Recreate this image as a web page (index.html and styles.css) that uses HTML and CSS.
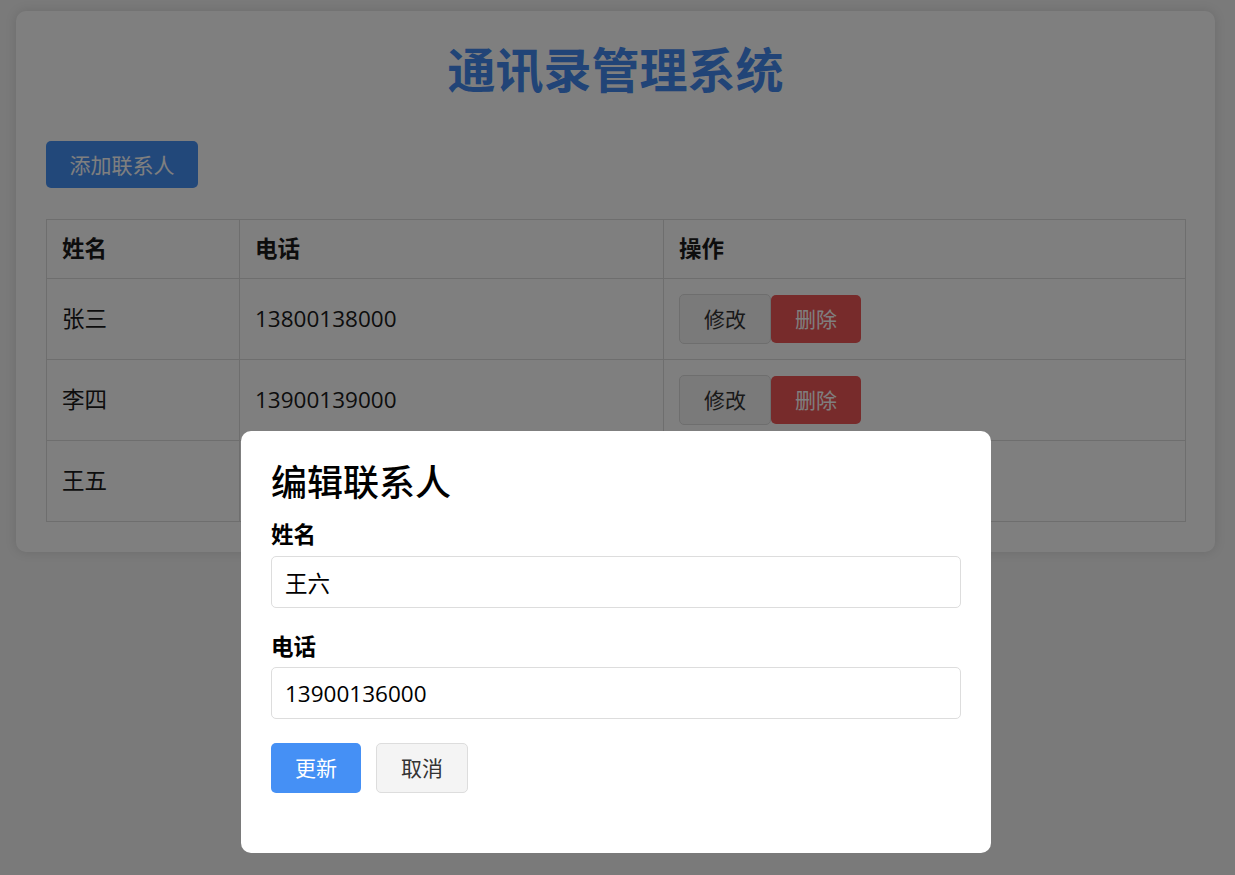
FILE: index.html
```html
<!DOCTYPE html>
<html lang="zh">
<head>
<meta charset="utf-8">
<title>通讯录管理系统</title>
<link rel="stylesheet" href="styles.css">
</head>
<body>
<div class="container">
  <h1 class="title">通讯录管理系统</h1>
  <div class="toolbar">
    <button class="btn btn-primary btn-add">添加联系人</button>
  </div>
  <table class="contacts">
    <colgroup>
      <col class="col-name">
      <col class="col-phone">
      <col class="col-ops">
    </colgroup>
    <thead>
      <tr><th>姓名</th><th>电话</th><th>操作</th></tr>
    </thead>
    <tbody>
      <tr>
        <td>张三</td><td>13800138000</td>
        <td><div class="ops"><button class="btn btn-edit">修改</button><button class="btn btn-delete">删除</button></div></td>
      </tr>
      <tr>
        <td>李四</td><td>13900139000</td>
        <td><div class="ops"><button class="btn btn-edit">修改</button><button class="btn btn-delete">删除</button></div></td>
      </tr>
      <tr>
        <td>王五</td><td>13700137000</td>
        <td><div class="ops"><button class="btn btn-edit">修改</button><button class="btn btn-delete">删除</button></div></td>
      </tr>
    </tbody>
  </table>
</div>

<div class="overlay">
  <div class="modal">
    <h2 class="modal-title">编辑联系人</h2>
    <div class="field">
      <label class="field-label" for="name">姓名</label>
      <input class="field-input" id="name" type="text" value="王六">
    </div>
    <div class="field">
      <label class="field-label" for="phone">电话</label>
      <input class="field-input" id="phone" type="text" value="13900136000">
    </div>
    <div class="modal-actions">
      <button class="btn btn-primary btn-update">更新</button>
      <button class="btn btn-cancel">取消</button>
    </div>
  </div>
</div>
</body>
</html>
```

FILE: styles.css
```css
* {
  box-sizing: border-box;
}

html, body {
  margin: 0;
  padding: 0;
}

body {
  background: #f4f4f4;
  font-family: "Open Sans", "Noto Sans CJK SC", sans-serif;
  font-size: 22.5px;
  color: #222;
  min-height: 875px;
}

.container {
  width: 1199px;
  margin: 11px 0 0 16px;
  padding: 30px 30px 30px;
  background: #fff;
  border-radius: 10px;
  box-shadow: 0 0 12px rgba(0, 0, 0, 0.12);
}

.title {
  margin: 0 0 42px;
  text-align: center;
  font-size: 48px;
  line-height: 58px;
  font-weight: 600;
  color: #4288ee;
}

.toolbar {
  margin-bottom: 31px;
  display: flex;
}

.btn {
  font-family: "Open Sans", "Noto Sans CJK SC", sans-serif;
  font-size: 21px;
  line-height: 28px;
  border: 0;
  border-radius: 5px;
  cursor: pointer;
  padding: 0 22px;
  display: flex;
  align-items: center;
  justify-content: center;
}

.btn-primary {
  background: #4590f5;
  color: #fff;
}

.btn-add {
  height: 47px;
  width: 152px;
  padding: 0;
}

.contacts {
  width: 1139px;
  border-collapse: collapse;
  table-layout: fixed;
}

.col-name { width: 193px; }
.col-phone { width: 424px; }
.col-ops { width: 522px; }

.contacts th,
.contacts td {
  border: 1px solid #ddd;
  padding: 15px 15px;
  text-align: left;
  line-height: 28px;
  color: #1a1a1a;
}

.contacts th {
  font-weight: 700;
  height: 59px;
}

.contacts td {
  height: 81px;
  font-weight: 400;
}

.ops {
  display: flex;
  align-items: center;
}

.btn-edit {
  width: 92px;
  height: 50px;
  padding: 0;
  background: #f4f4f4;
  border: 1px solid #ddd;
  color: #333;
}

.btn-delete {
  width: 90px;
  height: 48px;
  padding: 0;
  background: #ef5656;
  color: #fff;
}

.overlay {
  position: fixed;
  inset: 0;
  background: rgba(0, 0, 0, 0.5);
  display: flex;
  justify-content: center;
  align-items: flex-start;
  padding: 431px 3px 0 0;
}

.modal {
  width: 750px;
  background: #fff;
  border-radius: 10px;
  padding: 30px 30px 60px;
}

.modal-title {
  margin: 0 0 17px;
  font-size: 36px;
  line-height: 43px;
  font-weight: 500;
  color: #000;
}

.field {
  margin-bottom: 25px;
}

.field + .field {
  margin-bottom: 24px;
}

.field-label {
  display: block;
  font-weight: 700;
  line-height: 28px;
  margin-bottom: 7px;
  color: #000;
}

.field + .field .field-label {
  margin-bottom: 6px;
}

.field-input {
  display: block;
  width: 100%;
  height: 52px;
  padding: 0 13px;
  border: 1px solid #ddd;
  border-radius: 5px;
  font-family: "Open Sans", "Noto Sans CJK SC", sans-serif;
  font-size: 22.5px;
  color: #000;
  background: #fff;
  outline: none;
}

.modal-actions {
  display: flex;
  gap: 15px;
}

.btn-update {
  width: 90px;
  height: 50px;
  padding: 0;
}

.btn-cancel {
  width: 92px;
  height: 50px;
  padding: 0;
  background: #f4f4f4;
  border: 1px solid #ddd;
  color: #333;
}
```
